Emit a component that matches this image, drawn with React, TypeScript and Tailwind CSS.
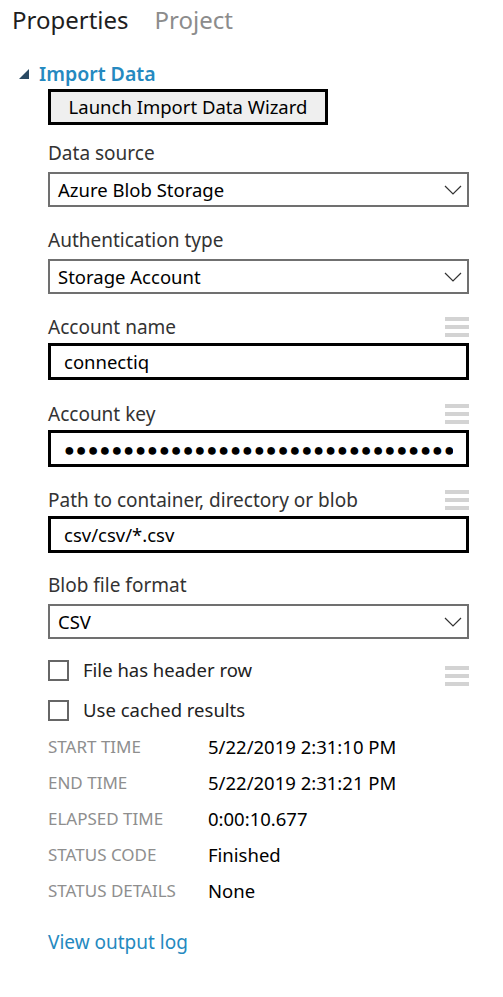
import React from 'react';

const Hamburger: React.FC<{ className?: string }> = ({ className = '' }) => (
  <div className={`flex w-[24px] flex-col gap-[4px] ${className}`}>
    <div className="h-[4px] bg-[#d3d3d3]" />
    <div className="h-[4px] bg-[#d3d3d3]" />
    <div className="h-[4px] bg-[#d3d3d3]" />
  </div>
);

const Chevron: React.FC = () => (
  <svg width="18" height="10" viewBox="0 0 18 10" fill="none" stroke="#333" strokeWidth="1.2">
    <path d="M1 1 L9 9 L17 1" />
  </svg>
);

const Label: React.FC<{ text: string; menu?: boolean }> = ({ text, menu }) => (
  <div className="flex h-[26px] items-center justify-between">
    <span className="text-[19px] text-[#333]">{text}</span>
    {menu && <Hamburger />}
  </div>
);

const Select: React.FC<{ value: string }> = ({ value }) => (
  <div className="mt-[6px] flex h-[35px] items-center justify-between border-2 border-[#707070] pl-[8px] pr-[5px]">
    <span className="text-[18.5px] text-black">{value}</span>
    <Chevron />
  </div>
);

const TextBox: React.FC<{ children: React.ReactNode }> = ({ children }) => (
  <div className="mt-[3px] flex h-[37px] items-center border-[3px] border-black pl-[13px] pr-[13px]">
    <div className="w-full overflow-hidden">{children}</div>
  </div>
);

const Checkbox: React.FC<{ text: string; menu?: boolean }> = ({ text, menu }) => (
  <div className="flex h-[40px] items-center justify-between">
    <div className="flex items-center">
      <div className="h-[21px] w-[21px] border-2 border-[#666]" />
      <span className="ml-[14px] text-[18.5px] text-[#222]">{text}</span>
    </div>
    {menu && <Hamburger className="mt-[12px]" />}
  </div>
);

const stats = [
  { label: 'START TIME', value: '5/22/2019 2:31:10 PM' },
  { label: 'END TIME', value: '5/22/2019 2:31:21 PM' },
  { label: 'ELAPSED TIME', value: '0:00:10.677' },
  { label: 'STATUS CODE', value: 'Finished' },
  { label: 'STATUS DETAILS', value: 'None' },
];

const App: React.FC = () => {
  return (
    <div className="h-[997px] w-[503px] bg-white" style={{ fontFamily: '"Noto Sans", "Open Sans", sans-serif' }}>
      <div className="flex h-[40px] items-center gap-[26px] pl-[12px]">
        <span className="text-[24px] text-[#1e1e1e]">Properties</span>
        <span className="text-[24px] text-[#8c8c8c]">Project</span>
      </div>

      <div className="mt-[22px] flex h-[24px] items-center pl-[18px]">
        <svg width="12" height="12" viewBox="0 0 12 12">
          <path d="M11 1 L11 11 L1 11 Z" fill="#2a4a63" />
        </svg>
        <span className="ml-[9px] text-[19.5px] font-semibold text-[#2589c0]">Import Data</span>
      </div>

      <div className="w-[469px] pl-[48px]">
        <div className="mt-[3px] flex h-[36px] w-[280px] items-center justify-center border-[3px] border-black bg-[#efefef]">
          <span className="text-[18.5px] text-black">Launch Import Data Wizard</span>
        </div>

        <div className="mt-[15px]">
          <Label text="Data source" />
          <Select value="Azure Blob Storage" />
        </div>

        <div className="mt-[20px]">
          <Label text="Authentication type" />
          <Select value="Storage Account" />
        </div>

        <div className="mt-[20px]">
          <Label text="Account name" menu />
          <TextBox>
            <span className="text-[18.5px] text-black">connectiq</span>
          </TextBox>
        </div>

        <div className="mt-[21px]">
          <Label text="Account key" menu />
          <TextBox>
            <div className="whitespace-nowrap text-[18px] leading-none tracking-[1px] text-black">
              {'●'.repeat(40)}
            </div>
          </TextBox>
        </div>

        <div className="mt-[20px]">
          <Label text="Path to container, directory or blob" menu />
          <TextBox>
            <span className="text-[18.5px] text-black">csv/csv/*.csv</span>
          </TextBox>
        </div>

        <div className="mt-[19px]">
          <Label text="Blob file format" />
          <Select value="CSV" />
        </div>

        <div className="mt-[11px]">
          <Checkbox text="File has header row" menu />
          <Checkbox text="Use cached results" />
        </div>

        <div className="mt-[-1px]">
          {stats.map((s) => (
            <div key={s.label} className="flex h-[36px] items-center">
              <span className="w-[160px] text-[17px] text-[#8e8e8e]">{s.label}</span>
              <span className="text-[18.5px] text-black">{s.value}</span>
            </div>
          ))}
        </div>

        <div className="mt-[20px] flex h-[26px] items-center text-[19px] text-[#2589c0]">View output log</div>
      </div>
    </div>
  );
};

export default App;
